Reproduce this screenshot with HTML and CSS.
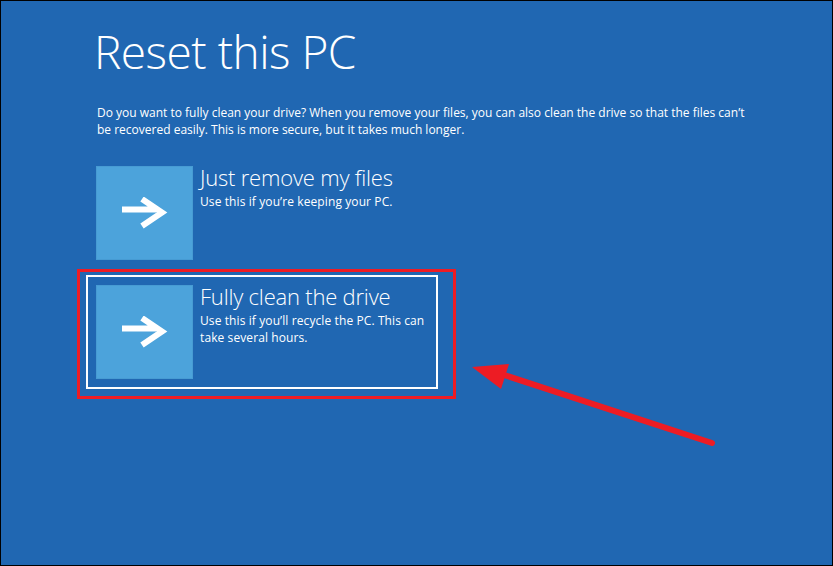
FILE: index.html
```html
<!DOCTYPE html>
<html>
<head>
<meta charset="utf-8">
<link rel="stylesheet" href="styles.css">
</head>
<body>
<div class="screen">
  <h1 class="title">Reset this PC</h1>
  <p class="intro">Do you want to fully clean your drive? When you remove your files, you can also clean the drive so that the files can’t be recovered easily. This is more secure, but it takes much longer.</p>
  <div class="options">
    <div class="option">
      <div class="tile">
        <svg class="arrow" width="46" height="32" viewBox="0 0 46 32"><path d="M0 12.5H34M20 2L40 15.5 20 29" fill="none" stroke="#fff" stroke-width="6" stroke-linejoin="miter"/></svg>
      </div>
      <div class="text">
        <div class="opt-title">Just remove my files</div>
        <div class="opt-desc">Use this if you’re keeping your PC.</div>
      </div>
    </div>
    <div class="option focused">
      <div class="tile">
        <svg class="arrow" width="46" height="32" viewBox="0 0 46 32"><path d="M0 12.5H34M20 2L40 15.5 20 29" fill="none" stroke="#fff" stroke-width="6" stroke-linejoin="miter"/></svg>
      </div>
      <div class="text">
        <div class="opt-title">Fully clean the drive</div>
        <div class="opt-desc">Use this if you’ll recycle the PC. This can take several hours.</div>
      </div>
      <div class="highlight"></div>
    </div>
  </div>
  <svg class="callout" width="833" height="566" viewBox="0 0 833 566">
    <line x1="712" y1="443" x2="495" y2="372" stroke="#ed1c24" stroke-width="6" stroke-linecap="round"/>
    <polygon points="472,367 509,364 501,389" fill="#ed1c24"/>
  </svg>
</div>
</body>
</html>
```
FILE: styles.css
```css
html, body {
  margin: 0;
  padding: 0;
  background: #000;
}
.screen {
  position: relative;
  box-sizing: border-box;
  width: 833px;
  height: 566px;
  border: 1px solid #000;
  background: #2067b2;
  color: #fff;
  font-family: "Open Sans", "Noto Sans", sans-serif;
  padding: 0 0 0 85px;
  overflow: hidden;
}
.title {
  margin: 19px 0 0 8px;
  font-weight: 300;
  font-size: 46px;
  line-height: 62px;
  letter-spacing: -0.5px;
}
.intro {
  margin: 22px 0 0 11px;
  width: 664px;
  font-size: 12px;
  line-height: 17px;
  letter-spacing: 0;
}
.options {
  margin-top: 18px;
  display: flex;
  flex-direction: column;
  gap: 5px;
}
.option {
  position: relative;
  display: flex;
  width: 332px;
  padding: 8px;
  border: 2px solid transparent;
  gap: 7px;
}
.option.focused {
  border-color: #fff;
}
.tile {
  flex: none;
  width: 97px;
  height: 94px;
  box-sizing: border-box;
  background: #4ca3db;
  border: 1px solid #479bd3;
  display: flex;
  align-items: center;
  justify-content: center;
}
.text {
  width: 232px;
}
.opt-title {
  font-weight: 300;
  font-size: 22px;
  line-height: 24px;
  letter-spacing: -0.2px;
  margin-top: -1px;
}
.opt-desc {
  font-size: 12px;
  line-height: 16.5px;
  margin-top: 5px;
  letter-spacing: 0.1px;
}
.highlight {
  position: absolute;
  left: -11px;
  top: -8px;
  right: -20px;
  bottom: -12px;
  border: 3px solid #ed1c24;
}
.callout {
  position: absolute;
  left: -1px;
  top: -1px;
  pointer-events: none;
}
```
